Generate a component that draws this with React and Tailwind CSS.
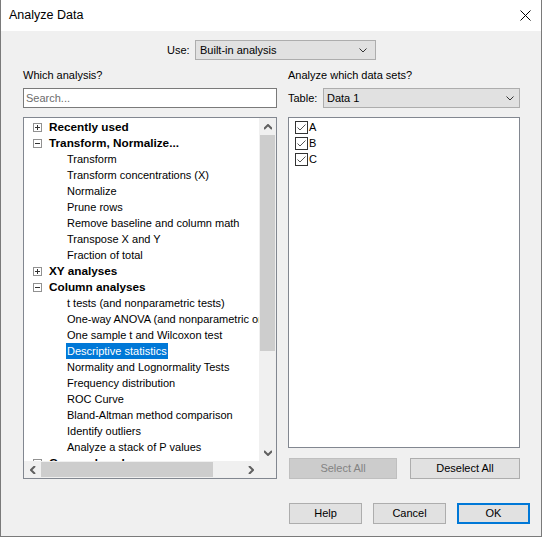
import React from 'react'

const tree = [
  { label: 'Recently used', group: true, open: false },
  { label: 'Transform, Normalize...', group: true, open: true },
  { label: 'Transform' },
  { label: 'Transform concentrations (X)' },
  { label: 'Normalize' },
  { label: 'Prune rows' },
  { label: 'Remove baseline and column math' },
  { label: 'Transpose X and Y' },
  { label: 'Fraction of total' },
  { label: 'XY analyses', group: true, open: false },
  { label: 'Column analyses', group: true, open: true },
  { label: 't tests (and nonparametric tests)' },
  { label: 'One-way ANOVA (and nonparametric or mixed)' },
  { label: 'One sample t and Wilcoxon test' },
  { label: 'Descriptive statistics', selected: true },
  { label: 'Normality and Lognormality Tests' },
  { label: 'Frequency distribution' },
  { label: 'ROC Curve' },
  { label: 'Bland-Altman method comparison' },
  { label: 'Identify outliers' },
  { label: 'Analyze a stack of P values' },
  { label: 'Grouped analyses', group: true, open: false },
]

const Chevron = ({ dir = 'down', color = '#333' }) => {
  const pts = {
    down: '0.5,0.5 4,4 7.5,0.5',
    up: '0.5,4 4,0.5 7.5,4',
  }[dir]
  return (
    <svg width="8" height="5" viewBox="0 0 8 5">
      <polyline points={pts} fill="none" stroke={color} strokeWidth="1" />
    </svg>
  )
}

const ScrollArrow = ({ dir }) => {
  const pts = {
    up: '0,5 4,1 8,5',
    down: '0,1 4,5 8,1',
    left: '5,0 1,4 5,8',
    right: '1,0 5,4 1,8',
  }[dir]
  const horiz = dir === 'left' || dir === 'right'
  return (
    <svg width={horiz ? 6 : 8} height={horiz ? 8 : 6} viewBox={horiz ? '0 0 6 8' : '0 0 8 6'}>
      <polyline points={pts} fill="none" stroke="#606060" strokeWidth="2" />
    </svg>
  )
}

const Expander = ({ open }) => (
  <svg width="9" height="9" viewBox="0 0 9 9" className="shrink-0">
    <rect x="0.5" y="0.5" width="8" height="8" fill="#fff" stroke="#919191" />
    <line x1="2" y1="4.5" x2="7" y2="4.5" stroke="#333" />
    {!open && <line x1="4.5" y1="2" x2="4.5" y2="7" stroke="#333" />}
  </svg>
)

const Check = () => (
  <svg width="13" height="13" viewBox="0 0 13 13" className="shrink-0">
    <rect x="0.5" y="0.5" width="12" height="12" fill="#fff" stroke="#333" />
    <polyline points="2.5,6.5 5,9 10.5,3.5" fill="none" stroke="#555" strokeWidth="1" />
  </svg>
)

const Button = ({ children, className = '' }) => (
  <div
    className={`h-[21px] flex items-center justify-center border border-[#adadad] bg-[#e1e1e1] text-black ${className}`}
  >
    {children}
  </div>
)

export default function App() {
  return (
    <div
      className="w-[542px] h-[537px] bg-[#f0f0f0] border-x border-b border-[#7a7a7a] text-[11px] text-black overflow-hidden"
      style={{ fontFamily: '"Liberation Sans", Arial, sans-serif' }}
    >
      {/* Title bar */}
      <div className="h-[31px] bg-white flex items-center justify-between pl-[8px] pr-[10px]">
        <span className="text-[12.5px]">Analyze Data</span>
        <svg width="11" height="11" viewBox="0 0 11 11">
          <line x1="0.5" y1="0.5" x2="10.5" y2="10.5" stroke="#000" />
          <line x1="10.5" y1="0.5" x2="0.5" y2="10.5" stroke="#000" />
        </svg>
      </div>

      {/* Use row */}
      <div className="mt-[9px] h-[20px] flex items-center pl-[166px]">
        <span className="w-[28px]">Use:</span>
        <div className="w-[181px] h-[20px] border border-[#adadad] bg-[#e1e1e1] flex items-center justify-between pl-[4px] pr-[8px]">
          <span>Built-in analysis</span>
          <Chevron />
        </div>
      </div>

      <div className="flex pl-[22px] gap-[11px] mt-[8px]">
        {/* Left column */}
        <div className="w-[254px] flex flex-col">
          <div className="h-[14px] leading-[14px]">Which analysis?</div>
          <div className="mt-[6px] h-[20px] border border-[#7a7a7a] bg-white flex items-center pl-[2px] text-[#6d6d6d]">
            Search...
          </div>
          <div className="mt-[9px] h-[362px] border border-[#828790] bg-white flex flex-col">
            <div className="flex h-[343px]">
              <div className="flex-1 overflow-hidden pt-[1px]">
                {tree.map((item) =>
                  item.group ? (
                    <div key={item.label} className="h-[16px] flex items-center pl-[9px] whitespace-nowrap">
                      <Expander open={item.open} />
                      <span className="ml-[7px] font-bold text-[11.75px]">{item.label}</span>
                    </div>
                  ) : (
                    <div key={item.label} className="h-[16px] flex items-center pl-[42px] whitespace-nowrap">
                      <span
                        className={`h-[16px] leading-[16px] px-[1px] ${
                          item.selected ? 'bg-[#0078d7] text-white' : ''
                        }`}
                      >
                        {item.label}
                      </span>
                    </div>
                  )
                )}
              </div>
              {/* vertical scrollbar */}
              <div className="w-[17px] bg-[#f0f0f0] flex flex-col">
                <div className="h-[17px] flex items-center justify-center">
                  <ScrollArrow dir="up" />
                </div>
                <div className="flex-1 flex flex-col px-[1px]">
                  <div className="h-[216px] bg-[#cdcdcd]" />
                </div>
                <div className="h-[17px] flex items-center justify-center">
                  <ScrollArrow dir="down" />
                </div>
              </div>
            </div>
            {/* horizontal scrollbar */}
            <div className="flex h-[17px]">
              <div className="flex-1 bg-[#f0f0f0] flex items-center">
                <div className="w-[17px] h-[17px] flex items-center justify-center">
                  <ScrollArrow dir="left" />
                </div>
                <div className="w-[172px] h-[15px] bg-[#cdcdcd]" />
                <div className="flex-1" />
                <div className="w-[17px] h-[17px] flex items-center justify-center">
                  <ScrollArrow dir="right" />
                </div>
              </div>
              <div className="w-[17px] bg-[#f0f0f0]" />
            </div>
          </div>
        </div>

        {/* Right column */}
        <div className="w-[232px] flex flex-col">
          <div className="h-[14px] leading-[14px]">Analyze which data sets?</div>
          <div className="mt-[6px] h-[20px] flex items-center">
            <span className="w-[35px]">Table:</span>
            <div className="flex-1 h-[20px] border border-[#adadad] bg-[#e1e1e1] flex items-center justify-between pl-[3px] pr-[5px]">
              <span>Data 1</span>
              <Chevron />
            </div>
          </div>
          <div className="mt-[9px] h-[331px] border border-[#828790] bg-white pt-[1px] pl-[6px]">
            {['A', 'B', 'C'].map((c) => (
              <div key={c} className="h-[16px] flex items-center">
                <Check />
                <span className="ml-[1px]">{c}</span>
              </div>
            ))}
          </div>
          <div className="mt-[10px] flex pl-[1px] gap-[13px]">
            <div className="w-[108px] h-[21px] flex items-center justify-center border border-[#bfbfbf] bg-[#cccccc] text-[#838383]">
              Select All
            </div>
            <Button className="w-[110px]">Deselect All</Button>
          </div>
        </div>
      </div>

      {/* Bottom buttons */}
      <div className="mt-[24px] flex pl-[288px] gap-[11px]">
        <Button className="w-[73px]">Help</Button>
        <Button className="w-[73px]">Cancel</Button>
        <div className="w-[73px] h-[21px] flex items-center justify-center border-2 border-[#0078d7] bg-[#e1e1e1]">
          OK
        </div>
      </div>
    </div>
  )
}
